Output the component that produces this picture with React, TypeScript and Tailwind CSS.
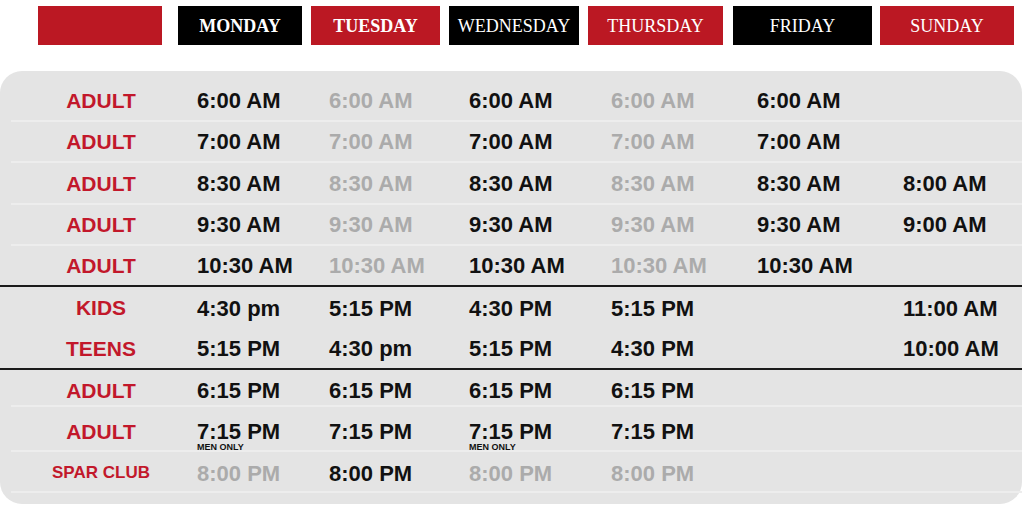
import React from 'react';

type Cell = { t: string; dim?: boolean; note?: string } | null;
type Row = { label: string; small?: boolean; cells: Cell[]; line?: 'soft' | 'hard' | 'none'; h?: string };

const days = [
  { name: 'MONDAY', bg: 'bg-black', w: 'w-[124px] ml-[16px]', bold: true },
  { name: 'TUESDAY', bg: 'bg-[#bb1823]', w: 'w-[129px] ml-[9px]', bold: true },
  { name: 'WEDNESDAY', bg: 'bg-black', w: 'w-[130px] ml-[9px]', bold: false },
  { name: 'THURSDAY', bg: 'bg-[#bb1823]', w: 'w-[135px] ml-[9px]', bold: false },
  { name: 'FRIDAY', bg: 'bg-black', w: 'w-[139px] ml-[10px]', bold: false },
  { name: 'SUNDAY', bg: 'bg-[#bb1823]', w: 'w-[134px] ml-[8px]', bold: false },
];

const c = (t: string, dim = false, note?: string): Cell => ({ t, dim, note });

const rows: Row[] = [
  { label: 'ADULT', cells: [c('6:00 AM'), c('6:00 AM', true), c('6:00 AM'), c('6:00 AM', true), c('6:00 AM'), null] },
  { label: 'ADULT', cells: [c('7:00 AM'), c('7:00 AM', true), c('7:00 AM'), c('7:00 AM', true), c('7:00 AM'), null] },
  { label: 'ADULT', h: 'h-[39.6px] pt-[1px]', cells: [c('8:30 AM'), c('8:30 AM', true), c('8:30 AM'), c('8:30 AM', true), c('8:30 AM'), c('8:00 AM')] },
  { label: 'ADULT', cells: [c('9:30 AM'), c('9:30 AM', true), c('9:30 AM'), c('9:30 AM', true), c('9:30 AM'), c('9:00 AM')] },
  { label: 'ADULT', line: 'hard', cells: [c('10:30 AM'), c('10:30 AM', true), c('10:30 AM'), c('10:30 AM', true), c('10:30 AM'), null] },
  { label: 'KIDS', line: 'none', h: 'h-[41.5px]', cells: [c('4:30 pm'), c('5:15 PM'), c('4:30 PM'), c('5:15 PM'), null, c('11:00 AM')] },
  { label: 'TEENS', line: 'hard', cells: [c('5:15 PM'), c('4:30 pm'), c('5:15 PM'), c('4:30 PM'), null, c('10:00 AM')] },
  { label: 'ADULT', h: 'h-[35px] pt-[4px]', cells: [c('6:15 PM'), c('6:15 PM'), c('6:15 PM'), c('6:15 PM'), null, null] },
  { label: 'ADULT', h: 'h-[43px] pt-[6px]', cells: [c('7:15 PM', false, 'MEN ONLY'), c('7:15 PM'), c('7:15 PM', false, 'MEN ONLY'), c('7:15 PM'), null, null] },
  { label: 'SPAR CLUB', small: true, h: 'h-[39.2px] pt-[3px]', cells: [c('8:00 PM', true), c('8:00 PM'), c('8:00 PM', true), c('8:00 PM', true), null, null] },
];

const App: React.FC = () => {
  return (
    <div className="w-[1024px] h-[507px] bg-white overflow-hidden">
      {/* day header */}
      <div className="flex pt-[6px] pl-[38px] font-['Liberation_Serif',serif] text-[18px] text-white">
        <div className="w-[124px] h-[39px] bg-[#bb1823]" />
        {days.map((d) => (
          <div
            key={d.name}
            className={`${d.w} ${d.bg} h-[39px] flex items-center justify-center pt-[1px] ${d.bold ? 'font-bold' : 'font-normal'}`}
          >
            {d.name}
          </div>
        ))}
      </div>

      {/* schedule panel */}
      <div className="mt-[26px] mr-[2px] h-[433px] bg-[#e4e4e4] rounded-[22px] pt-[10px] font-['Liberation_Sans',sans-serif]">
        {rows.map((r, i) => (
          <div
            key={i}
            className={
              r.line === 'hard'
                ? 'border-b-2 border-[#1a1a1a]'
                : r.line === 'none'
                ? ''
                : 'ml-[11px] border-b-2 border-[#ededed]'
            }
          >
            <div
              className={`grid grid-cols-[186px_132px_140px_142px_146px_146px_1fr] items-center ${r.h ?? 'h-[39.2px]'} ${
                r.line === 'hard' || r.line === 'none' ? 'pl-[11px]' : ''
              }`}
            >
              <div
                className={`text-center pr-[6px] font-bold text-[#c2182b] ${r.small ? 'text-[17px]' : 'text-[21px]'}`}
              >
                {r.label}
              </div>
              {r.cells.map((cell, j) => (
                <div key={j} className="relative">
                  {cell && (
                    <>
                      <span className={`text-[22px] font-bold ${cell.dim ? 'text-[#ababab]' : 'text-[#111]'}`}>
                        {cell.t}
                      </span>
                      {cell.note && (
                        <span className="absolute left-0 top-[26px] text-[9px] font-bold text-[#111] whitespace-nowrap">
                          {cell.note}
                        </span>
                      )}
                    </>
                  )}
                </div>
              ))}
            </div>
          </div>
        ))}
      </div>
    </div>
  );
};

export default App;
